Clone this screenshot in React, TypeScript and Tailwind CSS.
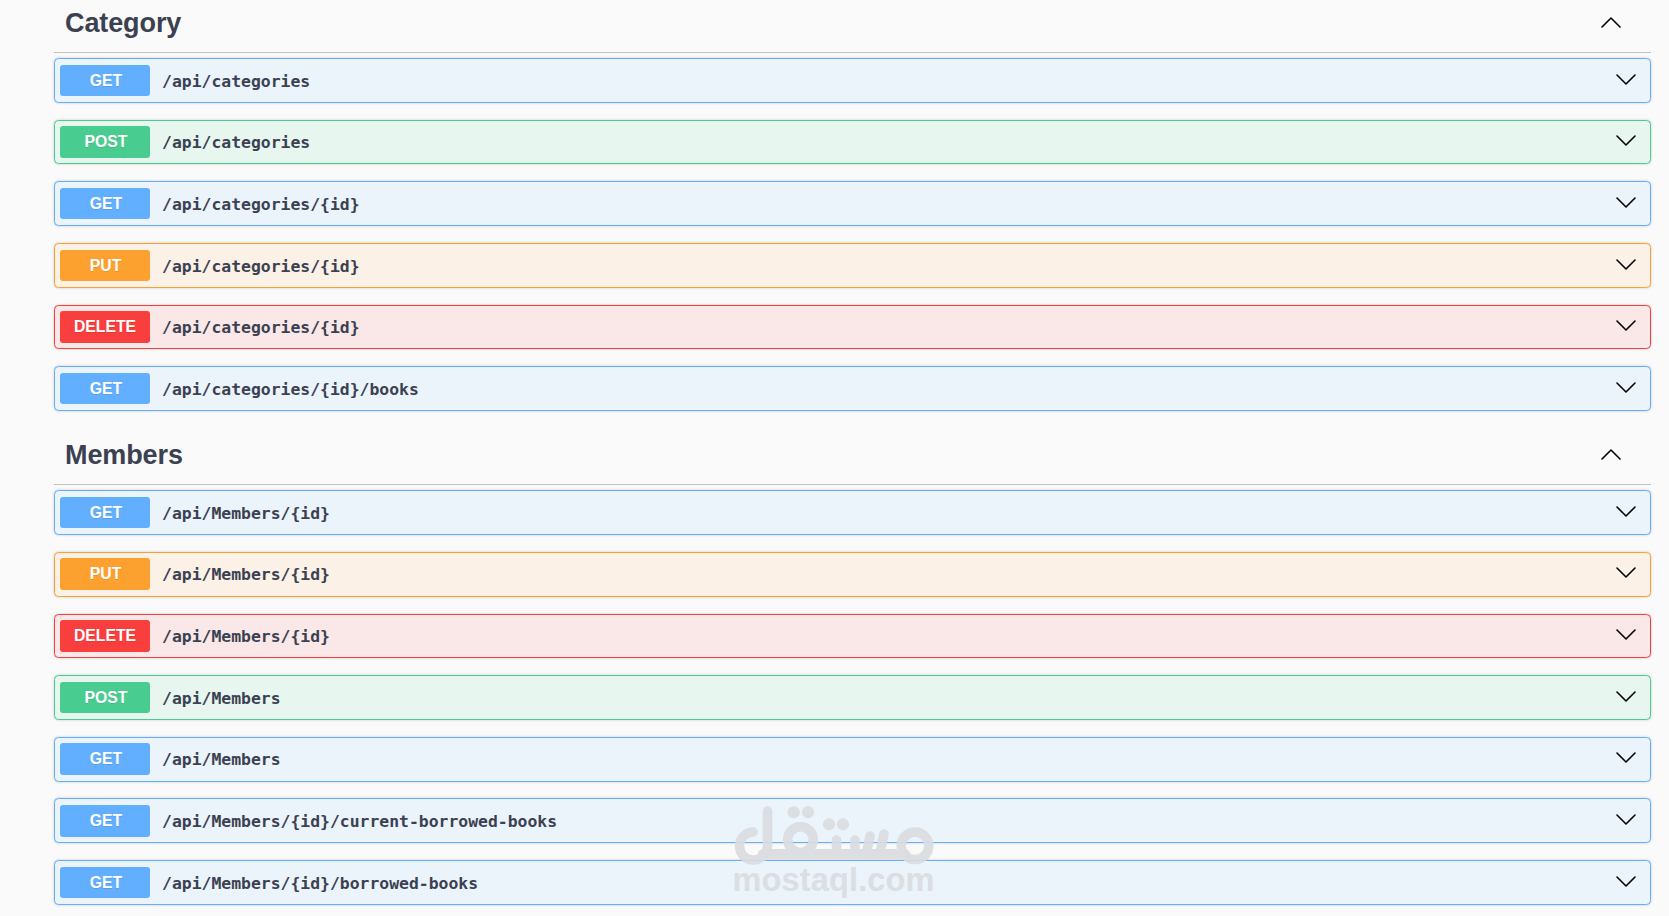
type Method = "GET" | "POST" | "PUT" | "DELETE";

interface Endpoint {
  method: Method;
  path: string;
}

const category: Endpoint[] = [
  { method: "GET", path: "/api/categories" },
  { method: "POST", path: "/api/categories" },
  { method: "GET", path: "/api/categories/{id}" },
  { method: "PUT", path: "/api/categories/{id}" },
  { method: "DELETE", path: "/api/categories/{id}" },
  { method: "GET", path: "/api/categories/{id}/books" },
];

const members: Endpoint[] = [
  { method: "GET", path: "/api/Members/{id}" },
  { method: "PUT", path: "/api/Members/{id}" },
  { method: "DELETE", path: "/api/Members/{id}" },
  { method: "POST", path: "/api/Members" },
  { method: "GET", path: "/api/Members" },
  { method: "GET", path: "/api/Members/{id}/current-borrowed-books" },
  { method: "GET", path: "/api/Members/{id}/borrowed-books" },
];

const rowColors: Record<Method, string> = {
  GET: "border-[#61affe] bg-[#ebf3fb]",
  POST: "border-[#49cc90] bg-[#e8f6f0]",
  PUT: "border-[#fca130] bg-[#fbf1e6]",
  DELETE: "border-[#f93e3e] bg-[#fae7e7]",
};

const badgeColors: Record<Method, string> = {
  GET: "bg-[#61affe] pl-[2px]",
  POST: "bg-[#49cc90] pl-[2px]",
  PUT: "bg-[#fca130] pl-px",
  DELETE: "bg-[#f93e3e]",
};

function Chevron({ className }: { className: string }) {
  return (
    <svg
      viewBox="0 0 20 11"
      className={`h-[11px] w-5 shrink-0 ${className}`}
      fill="none"
      stroke="black"
      strokeWidth="1.6"
      strokeLinecap="round"
      strokeLinejoin="round"
    >
      <path d="M1 1 L10 10 L19 1" />
    </svg>
  );
}

function Row({ method, path }: Endpoint) {
  return (
    <div
      className={`flex h-[44.78px] items-start rounded-[4.5px] border px-[5px] pt-[5.6px] shadow-[0_0_3px_rgba(0,0,0,0.19)] ${rowColors[method]}`}
    >
      <div
        className={`h-[31.55px] w-[90px] rounded-[3px] text-center text-[15.75px] leading-[31px] font-bold text-white [text-shadow:0_1px_0_rgba(0,0,0,0.1)] ${badgeColors[method]}`}
      >
        {method}
      </div>
      <div className="ml-3 flex-1 font-['DejaVu_Sans_Mono',monospace] text-[16.42px] leading-[33px] font-bold">
        {path}
      </div>
      <Chevron className="mt-[9px] mr-[9px]" />
    </div>
  );
}

function Section({ title, items }: { title: string; items: Endpoint[] }) {
  return (
    <section>
      <div className="flex h-[62px] items-start justify-between border-b border-[#3b4151]/30 pl-[11px]">
        <h3 className="pt-[17px] text-[27px] leading-[31px] font-bold tracking-[-0.1px]">
          {title}
        </h3>
        <Chevron className="mt-[25.5px] mr-[30px] rotate-180" />
      </div>
      <div className="flex flex-col gap-[16.87px] pt-[5.1px]">
        {items.map((item, i) => (
          <Row key={i} {...item} />
        ))}
      </div>
    </section>
  );
}

function Watermark() {
  return (
    <div className="absolute top-[800px] left-[733px] opacity-90">
      <svg viewBox="0 0 202 106" className="h-[106px] w-[202px]">
        <g fill="none" stroke="#dadce0" strokeLinecap="round" strokeWidth="9.5">
          <path d="M20 32 A14 14 0 1 0 34.5 46 V11" />
          <circle cx="67.5" cy="39.6" r="12.8" />
          <circle cx="182" cy="45.8" r="13.8" />
          <path d="M30 54.3 H172" strokeWidth="10.5" />
          <path d="M103.5 40 V53 M122 40 V53 M137 36 L133.5 53 M151 34 L147 53" />
        </g>
        <g fill="#dadce0">
          <circle cx="60.7" cy="12.3" r="6.1" />
          <circle cx="75" cy="12.3" r="6.1" />
          <circle cx="96" cy="24.3" r="6.1" />
          <circle cx="110" cy="24.3" r="6.1" />
          <text
            x="-0.5"
            y="91"
            fontSize="32.5"
            fontWeight="700"
            textLength="202"
            fontFamily="Liberation Sans, sans-serif"
          >
            mostaql.com
          </text>
        </g>
      </svg>
    </div>
  );
}

export default function App() {
  return (
    <div className="relative h-[916px] overflow-hidden bg-[#fafafa] pr-[18px] pl-[54px] font-['Liberation_Sans',sans-serif] text-[#3b4151]">
      <div className="-mt-[9px] flex flex-col gap-[12.2px]">
        <Section title="Category" items={category} />
        <Section title="Members" items={members} />
      </div>
      <Watermark />
    </div>
  );
}
